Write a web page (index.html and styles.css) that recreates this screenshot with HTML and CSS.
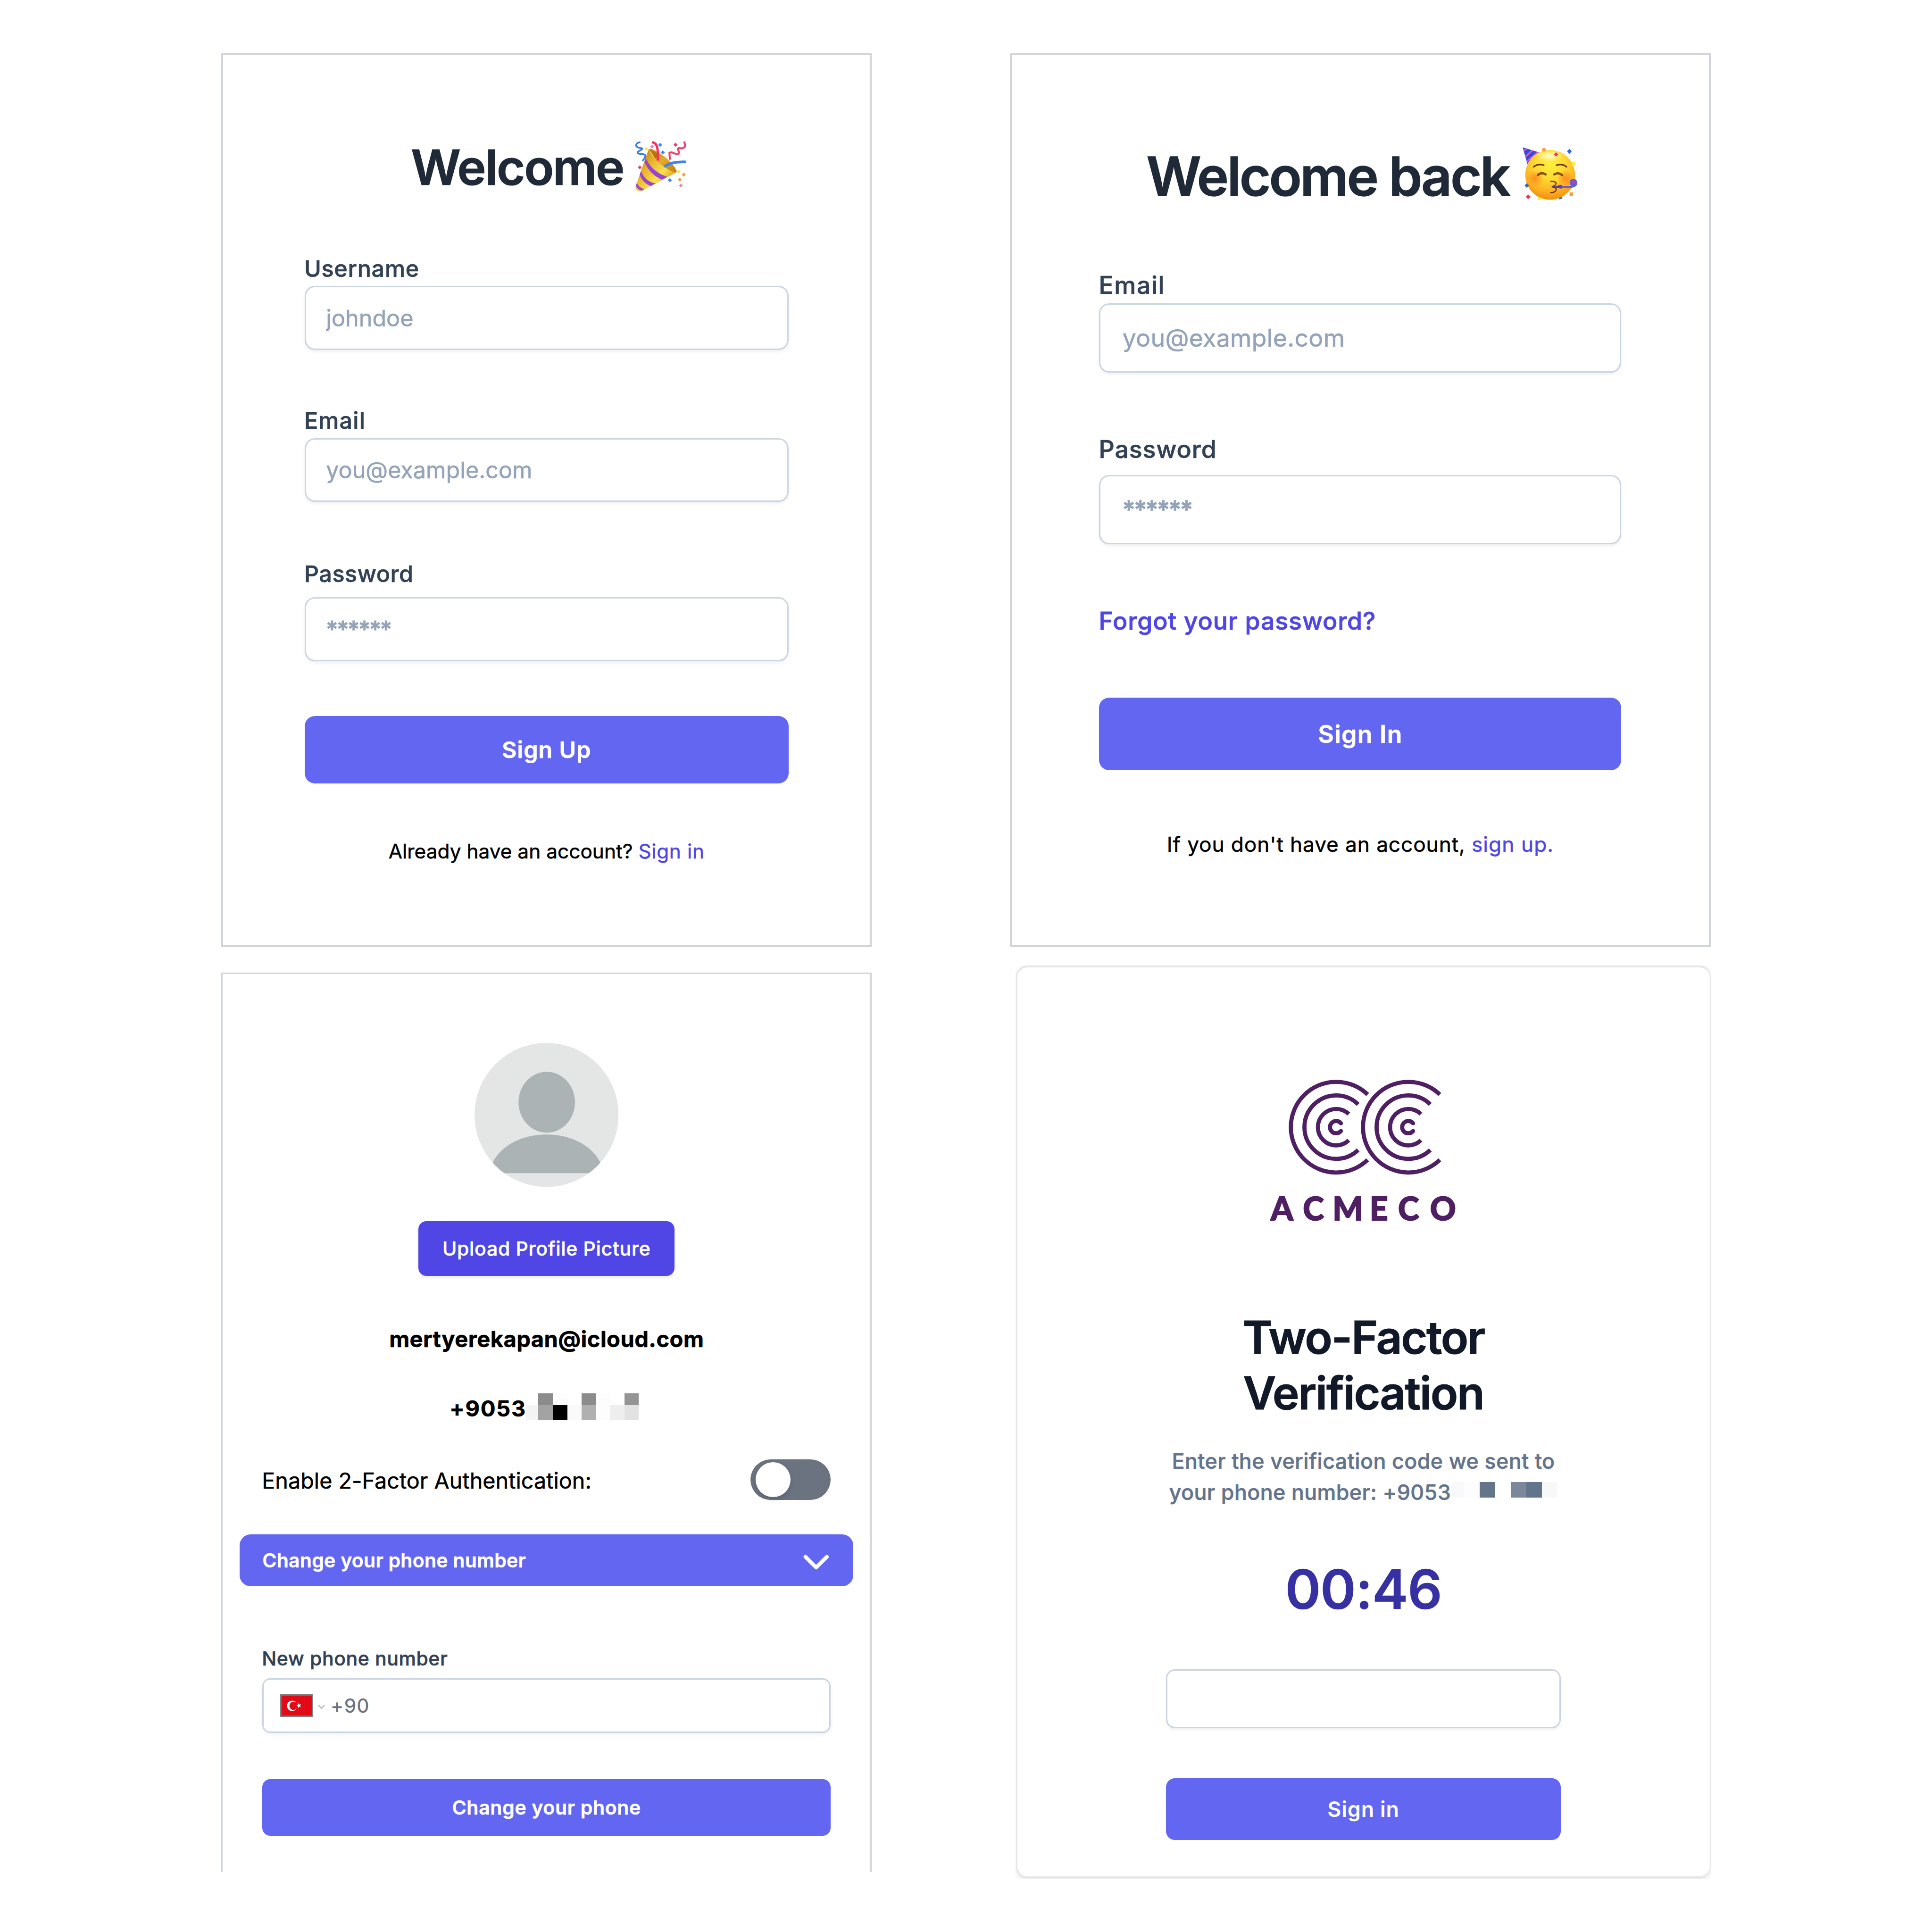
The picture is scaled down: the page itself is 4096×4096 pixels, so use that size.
FILE: index.html
```html
<!DOCTYPE html>
<html lang="en">
<head>
<meta charset="utf-8">
<title>Account screens</title>
<link rel="stylesheet" href="styles.css">
</head>
<body>
<main class="board">
  <div class="column column-left">
    <section class="card card-signup">
      <h1 class="title">
        <span>Welcome</span>
        <svg class="emoji" viewBox="90 80 342 340" aria-hidden="true">
          <defs>
            <linearGradient id="cone" x1="0" y1="0.3" x2="0.8" y2="1">
              <stop offset="0" stop-color="#c98a12"/><stop offset="0.3" stop-color="#e9b52c"/><stop offset="0.62" stop-color="#fbe04e"/><stop offset="1" stop-color="#c78d1c"/>
            </linearGradient>
            <linearGradient id="mouth" x1="0" y1="0" x2="1" y2="1">
              <stop offset="0" stop-color="#d98c10"/><stop offset="0.5" stop-color="#e3ab2a"/><stop offset="1" stop-color="#c9780c"/>
            </linearGradient>
          </defs>
          <path d="M180 136Q190 128 205 136C270 165 345 225 368 280Q370 290 362 294L280 285Z" fill="url(#mouth)"/>
          <path d="M186 138C205 160 212 180 224 198L252 178C235 160 215 145 186 138Z" fill="#b87408"/>
          <path d="M180 135L92 385Q87 406 104 415Q118 423 138 414L365 293C320 285 220 225 180 135Z" fill="url(#cone)"/>
          <path d="M160 194C190 262 245 302 306 322L270 341C215 318 178 280 151 222Z" fill="#9a45cf"/>
          <path d="M128 282C150 335 185 360 228 366L194 384C160 372 135 348 119 308Z" fill="#9a45cf"/>
          <path d="M100 362C112 388 130 400 153 404L132 416C112 408 98 396 94 380Z" fill="#9a45cf"/>
          <path d="M207 90C238 92 245 130 241 212" fill="none" stroke="#f0345f" stroke-width="16"/>
          <circle cx="209" cy="89" r="8" fill="#f0345f"/>
          <path d="M284 252C325 226 380 218 434 221" fill="none" stroke="#3f84ee" stroke-width="18"/>
          <path d="M124 88C92 92 86 114 110 124C132 130 142 126 134 136C122 146 100 150 106 162C120 172 148 160 158 178C158 192 148 202 138 214" fill="none" stroke="#3a74e6" stroke-width="11"/>
          <path d="M323 206L320 160C342 146 356 176 380 166C396 156 362 130 386 128C424 134 434 116 418 84" fill="none" stroke="#f2406c" stroke-width="13"/>
          <g fill="#fbe33a"><path d="M163 121l12 12-12 12-12-12z"/><path d="M382 275l12 12-12 12-12-12z"/></g>
          <g fill="#f47fb6"><path d="M203 105l13 13-13 13-13-13z"/><path d="M398 367l13 13-13 13-13-13z"/></g>
          <g fill="#3f8cf0"><path d="M257 92l14 14-14 14-14-14z"/><path d="M275 143l14 14-14 14-14-14z"/><path d="M323 330l14 14-14 14-14-14z"/></g>
          <g fill="#ea3f68"><path d="M361 91l14 14-14 14-14-14z"/><path d="M120 245l13 13-13 13-13-13z"/></g>
          <g fill="#f79a38"><path d="M417 294l13 13-13 13-13-13z"/><path d="M390 328l13 13-13 13-13-13z"/></g>
        </svg>
      </h1>
      <label class="label label-1">Username</label>
      <input class="input input-1" type="text" placeholder="johndoe">
      <label class="label label-2">Email</label>
      <input class="input input-2" type="text" placeholder="you@example.com">
      <label class="label label-3">Password</label>
      <input class="input input-3 stars" type="text" placeholder="******">
      <button class="button">Sign Up</button>
      <p class="footnote">Already have an account? <a class="link">Sign in</a></p>
    </section>

    <section class="card card-profile">
      <svg class="avatar" viewBox="0 0 324 324" aria-hidden="true">
        <defs><clipPath id="round"><circle cx="162" cy="162" r="162"/></clipPath></defs>
        <g clip-path="url(#round)">
          <rect width="324" height="324" fill="#e3e6e5"/>
          <ellipse cx="162.500" cy="133.500" rx="63.500" ry="68.500" fill="#abb3b5"/>
          <path d="M34 293C40 245 92 206 162 206S284 245 290 293Z" fill="#abb3b5"/>
        </g>
      </svg>
      <button class="upload">Upload Profile Picture</button>
      <p class="email">mertyerekapan@icloud.com</p>
      <p class="phone">
        <span>+9053</span>
        <svg class="mask" viewBox="0 0 254 59" shape-rendering="crispEdges" aria-hidden="true">
          <path fill="#8c8c8c" d="M28 0h32v27h-32zM125 0h32v27h-32z"/><path fill="#959595" d="M222 0h32v27h-32z"/>
          <path fill="#fdfdfd" d="M60 0h33v27h-33zM157 0h32v59h-32z"/><path fill="#f4f4f4" d="M0 27h28v32h-28z"/>
          <path fill="#a3a3a3" d="M28 27h32v32h-32z"/><path d="M60 27h33v32h-33z"/><path fill="#fafafa" d="M93 27h32v32h-32z"/>
          <path fill="#b0b0b0" d="M125 27h32v32h-32z"/><path fill="#eeeeee" d="M189 27h33v32h-33z"/><path fill="#e2e2e2" d="M222 27h32v32h-32z"/>
        </svg>
      </p>
      <div class="two-factor"><span>Enable 2-Factor Authentication:</span><span class="toggle"><span class="knob"></span></span></div>
      <div class="accordion">
        <span>Change your phone number</span>
        <svg class="chevron" viewBox="0 0 60 36" aria-hidden="true"><path d="M6 6L30 30L54 6" fill="none" stroke="#fff" stroke-width="8.500" stroke-linecap="round" stroke-linejoin="round"/></svg>
      </div>
      <label class="label label-phone">New phone number</label>
      <div class="input phone-input">
        <svg class="flag" viewBox="0 0 74 51" aria-hidden="true">
          <rect x="1.500" y="1.500" width="71" height="48" fill="#e30a17" stroke="#7f7f7f" stroke-width="3"/>
          <circle cx="27" cy="26" r="11.700" fill="#fff"/><circle cx="30" cy="26" r="9.300" fill="#e30a17"/>
          <path d="M36.500 25.500l3.600-1.500.4-4 2.400 3.200 3.700-1-2 3.300 2 3.300-3.700-1-2.400 3.200-.4-4z" fill="#fff"/>
        </svg>
        <svg class="caret" viewBox="0 0 18 12" aria-hidden="true"><path d="M2 2L9 9.500L16 2" fill="none" stroke="#b5b8be" stroke-width="2.600"/></svg>
        <span>+90</span>
      </div>
      <button class="button change">Change your phone</button>
    </section>
  </div>

  <div class="column column-right">
    <section class="card card-signin">
      <h1 class="title">
        <span>Welcome back</span>
        <svg class="emoji" viewBox="77 63 371 361" aria-hidden="true">
          <defs>
            <radialGradient id="face" cx="0.5" cy="0.28" r="0.74">
              <stop offset="0" stop-color="#fff03c"/><stop offset="0.4" stop-color="#ffdb33"/><stop offset="0.75" stop-color="#fdb022"/><stop offset="1" stop-color="#f08c0c"/>
            </radialGradient>
            <radialGradient id="shine"><stop offset="0" stop-color="#fffbd0"/><stop offset="1" stop-color="#fffbd0" stop-opacity="0"/></radialGradient>
            <radialGradient id="blush"><stop offset="0" stop-color="#ff7a1c" stop-opacity="0.75"/><stop offset="1" stop-color="#ff7a1c" stop-opacity="0"/></radialGradient>
            <clipPath id="hat"><path d="M77 64L188 98C150 118 126 145 110 178Z"/></clipPath>
          </defs>
          <path fill="#2f67d8" d="M318 398l24 0 0 14-18 4z"/>
          <circle cx="263" cy="250" r="168" fill="url(#face)"/>
          <ellipse cx="258" cy="122" rx="95" ry="40" fill="url(#shine)"/>
          <circle cx="163" cy="272" r="56" fill="url(#blush)"/><circle cx="366" cy="272" r="56" fill="url(#blush)"/>
          <g clip-path="url(#hat)">
            <rect x="70" y="60" width="125" height="125" fill="#2b50d6"/>
            <path d="M70 98L118 62M92 130L156 74M98 166L184 92" stroke="#ee4fc4" stroke-width="10"/>
          </g>
          <g fill="none" stroke="#6b3706" stroke-linecap="round">
            <path d="M152 196Q180 172 220 185M305 185Q345 172 374 196" stroke-width="10"/>
            <path d="M180 251Q206 229 232 247M291 247Q318 229 344 252" stroke-width="15" stroke="#84500a"/>
            <path d="M267 293Q302 293 303 308Q298 326 274 330Q304 336 305 350Q298 370 267 370" stroke-width="8"/>
          </g>
          <path d="M270 331L342 317V343Z" fill="#5637c8"/>
          <path d="M338 331H400Q432 328 438 312" fill="none" stroke="#4668dd" stroke-width="14"/>
          <path d="M350 331H410" fill="none" stroke="#c9388f" stroke-width="13" stroke-dasharray="11 14"/>
          <circle cx="420" cy="302" r="26" fill="#4668dd"/>
          <circle cx="420" cy="302" r="19" fill="none" stroke="#c23fae" stroke-width="5"/>
          <circle cx="420" cy="302" r="8" fill="none" stroke="#c23fae" stroke-width="5"/>
          <g fill="#2f67d8"><path d="M393 74l16 17-16 17-16-17z"/><path d="M106 306l16 16-16 16-16-16z"/></g>
          <g fill="#e23d62"><path d="M303 97l15 15-15 15-15-15z"/><path d="M115 382l17 16-17 16-17-16z"/></g>
          <g fill="#fbea4a"><path d="M408 163h25v25h-25z"/><path d="M189 400l16 10-16 14-14-12z"/></g>
          <g fill="#f7a040"><path d="M210 72l18-5 10 22-30 4z"/><path d="M394 368h24v23h-24z"/></g>
        </svg>
      </h1>
      <label class="label label-1">Email</label>
      <input class="input input-1" type="text" placeholder="you@example.com">
      <label class="label label-2">Password</label>
      <input class="input input-2 stars" type="text" placeholder="******">
      <a class="forgot">Forgot your password?</a>
      <button class="button">Sign In</button>
      <p class="footnote">If you don't have an account, <a class="link">sign up.</a></p>
    </section>

    <div class="frame">
      <section class="card card-verify">
        <svg class="logo" viewBox="0 0 445 340" role="img">
          <g fill="none" stroke="#4f1f63" stroke-width="9.300">
            <path d="M231.900 41.900A102 102 0 1 0 231.900 188.700M210.500 64A71.300 71.300 0 1 0 210.500 166.600M189.500 85.800A41 41 0 1 0 189.500 144.800"/>
            <path d="M394.200 41.900A102 102 0 1 0 394.200 188.700M372.800 64A71.300 71.300 0 1 0 372.800 166.600M351.800 85.800A41 41 0 1 0 351.800 144.800"/>
            <path d="M171.700 106.600A13.800 13.800 0 1 0 171.700 124M334 106.600A13.800 13.800 0 1 0 334 124" stroke-linecap="round"/>
          </g>
          <text class="wordmark" x="39 110 187.300 257 324 401.500" y="325">ACMECO</text>
        </svg>
        <h1 class="verify-title">Two-Factor<br>Verification</h1>
        <p class="verify-text">Enter the verification code we sent to</p>
        <p class="verify-text">
          <span>your phone number: +9053</span>
          <svg class="mask" viewBox="0 0 237 35" shape-rendering="crispEdges" aria-hidden="true">
            <path fill="#f8f9fb" d="M0 0h27v35h-27z"/><path fill="#fdfdfd" d="M27 0h35v35h-35z"/>
            <path fill="#64748b" d="M62 0h35v35h-35zM167 0h35v35h-35z"/><path fill="#7b889b" d="M132 0h35v35h-35z"/><path fill="#f8f8f9" d="M202 0h35v35h-35z"/>
          </svg>
        </p>
        <p class="timer">00:46</p>
        <input class="input code" type="text">
        <button class="button">Sign in</button>
      </section>
    </div>
  </div>
</main>
</body>
</html>
```
FILE: styles.css
```css
html { font-size: 94.2476px; }

*, *::before, *::after { box-sizing: border-box; }

body {
  margin: 0;
  background: #fff;
  font-family: Inter, "Liberation Sans", sans-serif;
  color: #000;
  -webkit-text-stroke: .006em currentColor;
}

h1, p { margin: 0; font-weight: inherit; }
svg { display: block; flex: none; }

input, button {
  font: inherit;
  border: 0;
  margin: 0;
  display: block;
  width: 100%;
}

.board {
  display: flex;
  width: 43.46rem;
  height: 43.46rem;
  padding: 1.2rem 0 0 4.98rem;
  overflow: hidden;
}

.column { display: flex; flex-direction: column; }
.column-left { width: 14.63rem; margin-right: 3.11rem; }
.column-right { width: 15.76rem; }

.card {
  display: flex;
  flex-direction: column;
  border: 4px solid #d1d5db;
  background: #fff;
}

/* shared pieces */
.title {
  display: flex;
  justify-content: center;
  align-items: center;
  font-weight: 600;
  color: #1f2937;
  white-space: nowrap;
  -webkit-text-stroke-width: .012em;
}

.label {
  display: block;
  line-height: .6rem;
  font-weight: 500;
  color: #334155;
  letter-spacing: .015em;
  -webkit-text-stroke-width: .014em;
}

.input {
  border: 3.5px solid #cbd5e1;
  border-radius: .23rem;
  background: #fff;
  box-shadow: 0 .04rem .07rem rgba(0, 0, 0, .06);
  outline: none;
}

.input::placeholder { color: #94a3b8; opacity: 1; -webkit-text-stroke: .012em #94a3b8; }
.stars::placeholder { letter-spacing: -.048em; font-weight: 500; -webkit-text-stroke-width: .025em; }

.button {
  display: flex;
  align-items: center;
  justify-content: center;
  padding: 0;
  border-radius: .23rem;
  background: #6366f1;
  color: #fff;
  font-weight: 600;
  letter-spacing: .021em;
  -webkit-text-stroke-width: .014em;
}

.footnote { line-height: .6rem; text-align: center; white-space: nowrap; }
.link { color: #4f46e5; }

/* sign up */
.card-signup { height: 20.11rem; padding: 1.92rem 1.83rem 0; font-size: .515rem; }
.card-signup .title { height: 1.2rem; padding-left: .09rem; font-size: 1.1rem; letter-spacing: -.0224em; }
.card-signup .emoji { width: 1.14rem; height: 1.133rem; margin: 0 0 .05rem .27rem; }
.card-signup .label { margin-left: -.01rem; }
.card-signup .label-1 { margin-top: 1.385rem; margin-bottom: .085rem; }
.card-signup .label-2 { margin-top: 1.3rem; margin-bottom: .08rem; letter-spacing: .024em; }
.card-signup .label-3 { margin-top: 1.32rem; margin-bottom: .22rem; letter-spacing: .011em; }
.card-signup .input { height: 1.44rem; padding: 0 .45rem; }
.card-signup .button { height: 1.525rem; margin-top: 1.23rem; }
.card-signup .footnote { margin-top: 1.23rem; font-size: .45rem; letter-spacing: 0; }
.card-signup .link { letter-spacing: .015em; }

/* sign in */
.card-signin { height: 20.11rem; padding: 2.075rem 1.965rem 0; font-size: .55rem; }
.card-signin .title { height: 1.3rem; padding-left: .08rem; font-size: 1.21rem; letter-spacing: -.0315em; }
.card-signin .emoji { width: 1.237rem; height: 1.203rem; margin: 0 0 .11rem .31rem; }
.card-signin .label { margin-left: -.01rem; }
.card-signin .label-1 { margin-top: 1.5rem; margin-bottom: .105rem; letter-spacing: .03em; }
.card-signin .label-2 { margin-top: 1.43rem; margin-bottom: .275rem; letter-spacing: .0175em; }
.card-signin .input { height: 1.56rem; padding: 0 .49rem; letter-spacing: .0058em; }
.forgot {
  margin: 1.43rem 0 0 -.01rem;
  line-height: .6rem;
  font-weight: 500;
  color: #4f46e5;
  letter-spacing: .0175em;
  -webkit-text-stroke-width: .016em;
}
.card-signin .button { height: 1.64rem; margin-top: 1.415rem; letter-spacing: .025em; }
.card-signin .footnote { margin-top: 1.365rem; font-size: .47rem; letter-spacing: .0195em; }
.card-signin .link { letter-spacing: .023em; }

/* profile */
.card-profile {
  height: 20.23rem;
  margin-top: .57rem;
  padding: 1.55rem .89rem 0;
  border-width: 3px;
  border-bottom: 0;
  font-size: .435rem;
}
.avatar { width: 3.24rem; height: 3.24rem; align-self: center; }
.upload {
  width: 5.76rem;
  height: 1.23rem;
  margin: .77rem auto 0;
  padding: 0;
  border-radius: .18rem;
  background: #4f46e5;
  box-shadow: 0 .04rem .07rem rgba(0, 0, 0, .08);
  color: #fff;
  font-weight: 500;
  letter-spacing: .017em;
  -webkit-text-stroke-width: .014em;
}
.email {
  margin-top: 1.12rem;
  line-height: .6rem;
  text-align: center;
  font-size: .5rem;
  font-weight: 700;
  letter-spacing: .009em;
}
.phone {
  display: flex;
  justify-content: center;
  align-items: center;
  height: .6rem;
  margin-top: .96rem;
  padding-right: .11rem;
  font-size: .5rem;
  font-weight: 700;
  letter-spacing: .034em;
}
.phone .mask { width: 2.54rem; height: .59rem; margin: -.08rem 0 0 -.01rem; }
.two-factor {
  display: flex;
  justify-content: space-between;
  align-items: center;
  height: .91rem;
  margin-top: .85rem;
  font-size: .495rem;
  letter-spacing: .001em;
}
.two-factor > span:first-child { margin: .04rem 0 0 -.01rem; }
.toggle {
  display: flex;
  align-items: center;
  width: 1.81rem;
  height: .91rem;
  padding-left: .115rem;
  border-radius: .455rem;
  background: #6b7280;
}
.knob {
  width: .79rem;
  height: .79rem;
  border-radius: 50%;
  background: #fff;
  box-shadow: 0 .06rem .12rem rgba(0, 0, 0, .12);
}
.accordion {
  display: flex;
  justify-content: space-between;
  align-items: center;
  height: 1.165rem;
  margin: .775rem -.51rem 0;
  padding: 0 .54rem 0 .51rem;
  border-radius: .25rem;
  background: #6366f1;
  color: #fff;
  font-weight: 600;
  letter-spacing: .0065em;
}
.chevron { width: .6rem; height: .36rem; margin-top: .08rem; }
.label-phone { margin: 1.325rem 0 .145rem -.01rem; letter-spacing: .0145em; }
.phone-input {
  display: flex;
  align-items: center;
  height: 1.23rem;
  padding-left: .365rem;
  border-radius: .18rem;
  color: #6b7280;
  letter-spacing: .0365em;
}
.flag { width: .74rem; height: .51rem; }
.caret { width: .18rem; height: .12rem; margin: .06rem .12rem 0 .1rem; }
.change { height: 1.28rem; margin-top: 1.04rem; border-radius: .18rem; letter-spacing: .0165em; }

/* verification: the frame trims the card's shadow */
.frame {
  height: 20.55rem;
  margin: .4rem 0 0 .12rem;
  padding: .01rem 0 .02rem .01rem;
  overflow: hidden;
}
.card-verify {
  align-items: center;
  height: 20.52rem;
  padding: 2.44rem 0 0;
  border-color: #e5e7eb;
  border-width: 4px 2px 3px 3px;
  border-radius: .26rem;
  box-shadow: 0 .04rem .12rem rgba(0, 0, 0, .12);
  font-size: .475rem;
}
.logo { width: 4.45rem; height: 3.4rem; }
.wordmark {
  font: 900 72px Lato, sans-serif;
  fill: #4f1f63;
  stroke: #4f1f63;
  stroke-width: 2px;
  text-anchor: middle;
}
.verify-title {
  margin-top: 1.855rem;
  line-height: 1.254rem;
  text-align: center;
  font-size: 1.02rem;
  font-weight: 600;
  color: #111827;
  letter-spacing: -.0236em;
  -webkit-text-stroke-width: .012em;
}
.verify-text {
  display: flex;
  align-items: center;
  height: .7rem;
  font-weight: 500;
  color: #64748b;
  white-space: nowrap;
  letter-spacing: .0088em;
  -webkit-text-stroke-width: .014em;
}
.verify-title + .verify-text { margin-top: .56rem; }
.verify-text .mask { width: 2.37rem; height: .35rem; margin: -.13rem 0 0 .03rem; }
.timer {
  margin-top: 1.23rem;
  line-height: 1.2rem;
  font-size: 1.22rem;
  font-weight: 600;
  color: #3730a3;
  letter-spacing: -.011em;
}
.code { width: 8.875rem; height: 1.32rem; margin-top: 1.2rem; padding: 0 .4rem; border-radius: .2rem; }
.card-verify .button {
  width: 8.875rem;
  height: 1.39rem;
  margin-top: 1.13rem;
  border-radius: .2rem;
  letter-spacing: .019em;
  -webkit-text-stroke-width: 0;
}
```
